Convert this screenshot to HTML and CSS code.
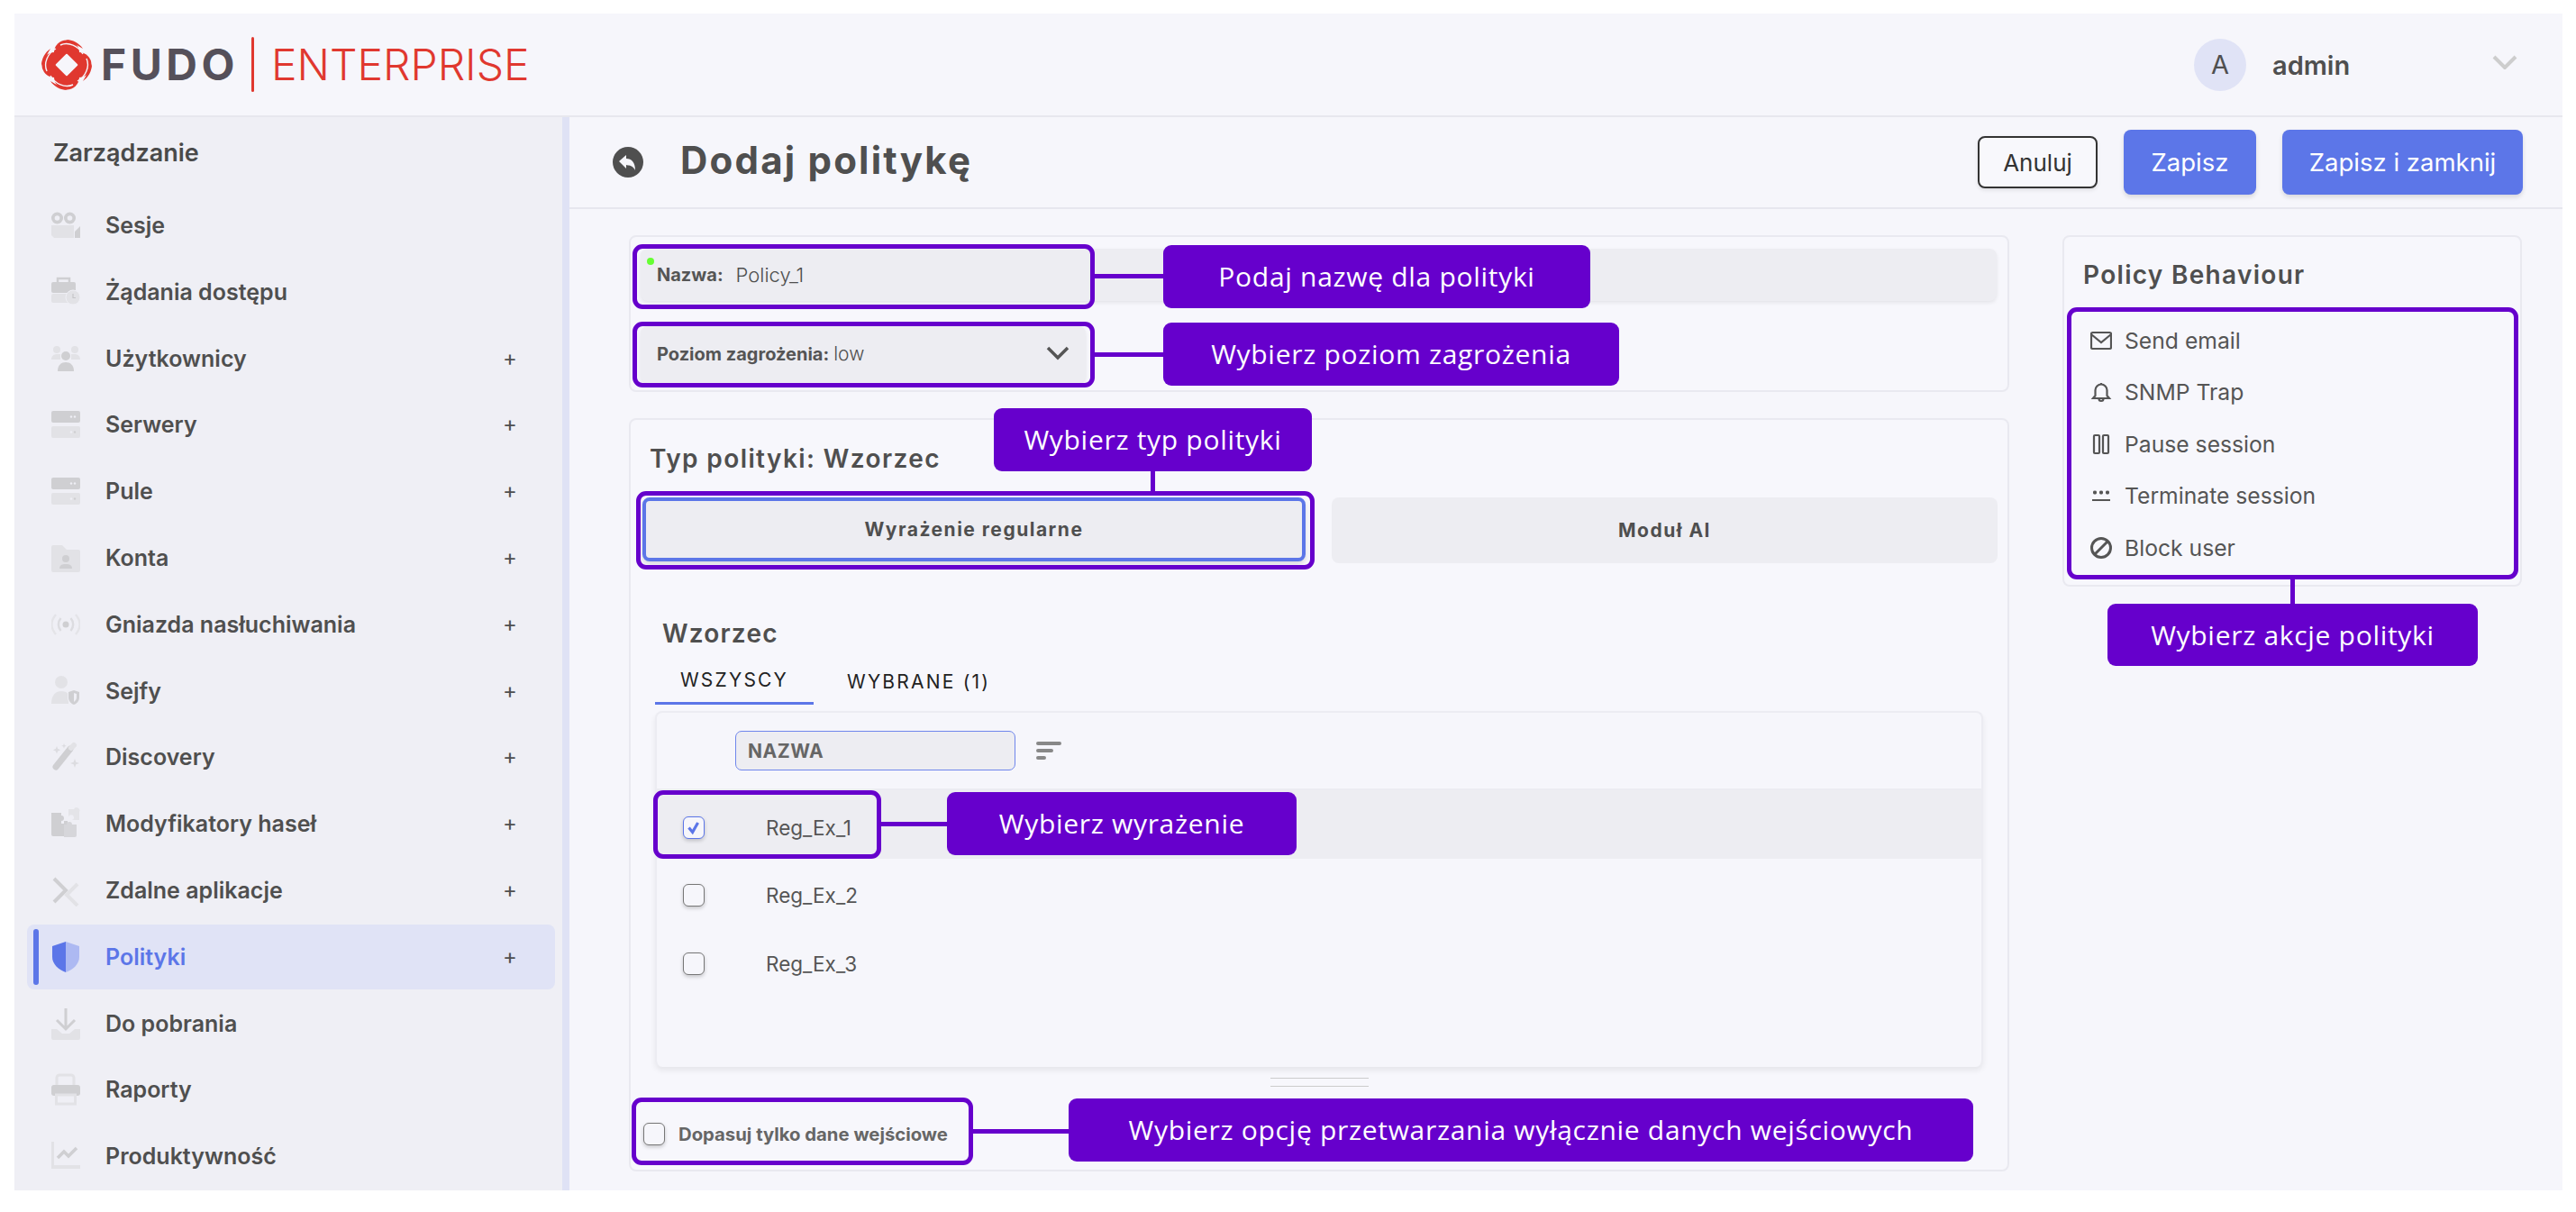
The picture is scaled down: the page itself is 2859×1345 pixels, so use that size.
FILE: index.html
```html
<!DOCTYPE html>
<html lang="pl">
<head>
<meta charset="utf-8">
<title>Fudo Enterprise</title>
<link rel="stylesheet" href="styles.css">
</head>
<body>
<div class="app">
  <header class="topbar">
    <div class="logo">
      <svg class="logo-mark" viewBox="0 0 58 58" aria-hidden="true">
        <g fill="#e0382f">
          <circle cx="29" cy="15.500" r="14"/>
          <circle cx="42.500" cy="29" r="14"/>
          <circle cx="29" cy="42.500" r="14"/>
          <circle cx="15.500" cy="29" r="14"/>
          <path d="M1 30C1 22 5 15 11 11 7 17 4 24 1 30z"/>
          <path d="M28 1C36 1 43 5 47 11 41 7 34 4 28 1z"/>
          <path d="M57 28C57 36 53 43 47 47 51 41 54 34 57 28z"/>
          <path d="M30 57C22 57 15 53 11 47 17 51 24 54 30 57z"/>
        </g>
        <g fill="none" stroke="#f6f6fb" stroke-width="1.400">
          <path d="M22 7C31 3 42 8 47 17"/>
          <path d="M51 22C55 31 50 42 41 47"/>
          <path d="M36 51C27 55 16 50 11 41"/>
          <path d="M7 36C3 27 8 16 17 11"/>
        </g>
        <rect x="20" y="20" width="18" height="18" rx="1" fill="#f6f6fb" transform="rotate(45 29 29)"/>
      </svg>
      <span class="logo-fudo">FUDO</span>
      <span class="logo-sep"></span>
      <span class="logo-ent">ENTERPRISE</span>
    </div>
    <div class="user">
      <span class="avatar">A</span>
      <span class="user-name">admin</span>
      <svg class="user-chev" viewBox="0 0 28 16" aria-hidden="true"><path d="M2 2l12 12L26 2" fill="none" stroke="#cdcdcd" stroke-width="4"/></svg>
    </div>
  </header>
  <div class="body">
    <nav class="sidebar">
      <div class="side-title">Zarządzanie</div>
      <ul class="menu">
        <li class="item">
          <svg class="ico" viewBox="0 0 32 36"><circle cx="6.500" cy="10" r="6.500" fill="#cfcfd2"/><circle cx="20.500" cy="10" r="6.500" fill="#cfcfd2"/><circle cx="6.500" cy="10" r="2.800" fill="#efeff5"/><circle cx="20.500" cy="10" r="2.800" fill="#efeff5"/><path d="M0 18h25v14H3l-3-3z" fill="#e2e2e6"/><path d="M26 25l6-6v13h-6z" fill="#cfcfd2"/></svg>
          <span class="label">Sesje</span>
        </li>
        <li class="item">
          <svg class="ico" viewBox="0 0 32 36"><path d="M7 7V3h13v4" fill="none" stroke="#cfcfd2" stroke-width="2.500"/><rect x="0" y="7" width="27" height="12" rx="2" fill="#cfcfd2"/><rect x="0" y="20" width="27" height="10" rx="2" fill="#e2e2e6"/><circle cx="24" cy="24" r="8" fill="#e2e2e6" stroke="#efeff5" stroke-width="1"/><path d="M24 20v4.500h3" fill="none" stroke="#c5c5c8" stroke-width="1.200"/></svg>
          <span class="label">Żądania dostępu</span>
        </li>
        <li class="item has-sub">
          <svg class="ico" viewBox="0 0 32 36"><circle cx="6" cy="8" r="4" fill="#e2e2e6"/><circle cx="26" cy="8" r="4" fill="#e2e2e6"/><path d="M0 19c0-4 3-6 6-6h4v6zM32 19c0-4-3-6-6-6h-4v6z" fill="#e2e2e6"/><circle cx="16" cy="15" r="5" fill="#cfcfd2"/><path d="M7 32c0-7 4-10 9-10s9 3 9 10z" fill="#cfcfd2"/></svg>
          <span class="label">Użytkownicy</span><span class="plus">+</span>
        </li>
        <li class="item has-sub">
          <svg class="ico" viewBox="0 0 32 36"><rect y="3" width="32" height="13" rx="2" fill="#cfcfd2"/><rect y="20" width="32" height="13" rx="2" fill="#e2e2e6"/><circle cx="22" cy="9.500" r="1.200" fill="#efeff5"/><circle cx="26" cy="9.500" r="1.200" fill="#efeff5"/><circle cx="22" cy="26.500" r="1.200" fill="#efeff5"/><circle cx="26" cy="26.500" r="1.200" fill="#cfcfd2"/></svg>
          <span class="label">Serwery</span><span class="plus">+</span>
        </li>
        <li class="item has-sub">
          <svg class="ico" viewBox="0 0 32 36"><rect y="3" width="32" height="13" rx="2" fill="#cfcfd2"/><rect y="20" width="32" height="13" rx="2" fill="#e2e2e6"/><circle cx="22" cy="9.500" r="1.200" fill="#efeff5"/><circle cx="26" cy="9.500" r="1.200" fill="#efeff5"/><circle cx="22" cy="26.500" r="1.200" fill="#efeff5"/><circle cx="26" cy="26.500" r="1.200" fill="#cfcfd2"/></svg>
          <span class="label">Pule</span><span class="plus">+</span>
        </li>
        <li class="item has-sub">
          <svg class="ico" viewBox="0 0 32 36"><path d="M2 4h10l5 5h13a2 2 0 0 1 2 2v21a2 2 0 0 1-2 2H2a2 2 0 0 1-2-2V6a2 2 0 0 1 2-2z" fill="#e2e2e6"/><circle cx="16" cy="19" r="4" fill="#cfcfd2"/><path d="M9 30c0-4 3-5 7-5s7 1 7 5z" fill="#cfcfd2"/></svg>
          <span class="label">Konta</span><span class="plus">+</span>
        </li>
        <li class="item has-sub">
          <svg class="ico" viewBox="0 0 32 36" fill="none"><path d="M5 7c-6 7-6 15 0 22M27 7c6 7 6 15 0 22" stroke="#e4e4e8" stroke-width="2.500"/><path d="M10.500 11c-3.500 4-3.500 10 0 14M21.500 11c3.500 4 3.500 10 0 14" stroke="#dcdce0" stroke-width="2.500"/><circle cx="16" cy="18" r="3.500" fill="#cfcfd2"/></svg>
          <span class="label">Gniazda nasłuchiwania</span><span class="plus">+</span>
        </li>
        <li class="item has-sub">
          <svg class="ico" viewBox="0 0 32 36"><circle cx="11" cy="8" r="7" fill="#e2e2e6"/><path d="M0 32c0-10 5-14 11-14 3 0 6 1 8 3v11z" fill="#e2e2e6"/><path d="M18 18l7-2 7 2v7c0 5-3 8-7 10-4-2-7-5-7-10z" fill="#efeff5"/><path d="M19 19l6-2 6 2v6c0 4-3 7-6 8-3-1-6-4-6-8z" fill="#cfcfd2"/><path d="M25 20l3 1v4c0 2-1 3-3 5z" fill="#efeff5"/></svg>
          <span class="label">Sejfy</span><span class="plus">+</span>
        </li>
        <li class="item has-sub">
          <svg class="ico" viewBox="0 0 32 36"><path d="M5 29L21 9" stroke="#cfcfd2" stroke-width="7" stroke-linecap="round"/><path d="M22 8l3-3" stroke="#e2e2e6" stroke-width="6" stroke-linecap="round"/><path d="M6 6l1.200 3 3 1.200-3 1.200-1.200 3-1.200-3-3-1.200 3-1.200zM14 3l.8 2 2 .8-2 .8-.8 2-.8-2-2-.8 2-.8zM26 20l1.300 3.700 3.700 1.300-3.700 1.300L26 30l-1.300-3.700-3.700-1.300 3.700-1.300z" fill="#dcdce0"/></svg>
          <span class="label">Discovery</span><span class="plus">+</span>
        </li>
        <li class="item has-sub">
          <svg class="ico" viewBox="0 0 32 36"><path d="M0 6h11v3a3 3 0 1 1 0 6v3h3v-3h4v17H2a2 2 0 0 1-2-2z" fill="#cfcfd2"/><path d="M14 19h3a3 3 0 1 1 6 0h5v12a2 2 0 0 1-2 2H14z" fill="#d6d6da"/><path d="M19 2h6a3 3 0 1 1 6 3v9h-8a3 3 0 1 0-4-3z" fill="#e4e4e8"/></svg>
          <span class="label">Modyfikatory haseł</span><span class="plus">+</span>
        </li>
        <li class="item has-sub">
          <svg class="ico" viewBox="0 0 32 36" fill="none"><path d="M3 5l13 13L3 31" stroke="#cfcfd2" stroke-width="4"/><path d="M29 11L17 23l12 12" stroke="#e2e2e6" stroke-width="4"/></svg>
          <span class="label">Zdalne aplikacje</span><span class="plus">+</span>
        </li>
        <li class="item has-sub active">
          <svg class="ico" viewBox="0 0 32 36"><path d="M16 1L1 6v12c0 8 7 14 15 17z" fill="#5c76e8"/><path d="M16 1l15 5v12c0 8-7 14-15 17z" fill="#adb9f2"/></svg>
          <span class="label">Polityki</span><span class="plus">+</span>
        </li>
        <li class="item">
          <svg class="ico" viewBox="0 0 32 36"><path d="M16 1v22M6 14l10 10 10-10" fill="none" stroke="#cfcfd2" stroke-width="3"/><path d="M0 24h6l6 5h8l6-5h6v10a2 2 0 0 1-2 2H2a2 2 0 0 1-2-2z" fill="#e2e2e6"/></svg>
          <span class="label">Do pobrania</span>
        </li>
        <li class="item">
          <svg class="ico" viewBox="0 0 32 36"><path d="M6 14V5a3 3 0 0 1 3-3h13a3 3 0 0 1 3 3v9" fill="none" stroke="#e2e2e6" stroke-width="3"/><rect y="13" width="32" height="12" rx="3" fill="#cfcfd2"/><rect x="5.500" y="24" width="21" height="10" fill="none" stroke="#e2e2e6" stroke-width="3"/></svg>
          <span class="label">Raporty</span>
        </li>
        <li class="item">
          <svg class="ico" viewBox="0 0 32 36"><path d="M0 2h3v26h29v4H0z" fill="#e2e2e6"/><path d="M7 20l7-7 5 5 9-9" fill="none" stroke="#cfcfd2" stroke-width="3.500"/></svg>
          <span class="label">Produktywność</span>
        </li>
      </ul>
    </nav>
    <div class="splitter"></div>
    <main class="main">
      <div class="page-head">
        <div class="page-title">
          <svg class="back" viewBox="0 0 34 34" aria-hidden="true"><circle cx="17" cy="17" r="17" fill="#4f4f4f"/><path d="M7 16l8-7v4c6 0 10 4 10 13-2-4-5-5.500-8-5.500l-2-.5v4z" fill="#f6f6fb"/></svg>
          <h1>Dodaj politykę</h1>
        </div>
        <div class="actions">
          <button class="btn btn-ghost">Anuluj</button>
          <button class="btn btn-primary btn-save">Zapisz</button>
          <button class="btn btn-primary btn-close">Zapisz i zamknij</button>
        </div>
      </div>
      <div class="content">
        <div class="left">
          <section class="card card-top">
            <div class="field field-name"><span class="dot"></span><b>Nazwa:</b><span class="val">Policy_1</span></div>
            <div class="field field-select"><b>Poziom zagrożenia:</b><span class="val-low">low</span>
              <svg class="sel-chev" viewBox="0 0 26 16" aria-hidden="true"><path d="M2 2l11 11L24 2" fill="none" stroke="#555" stroke-width="3.500"/></svg>
            </div>
          </section>
          <section class="card card-type">
            <h2 class="card-title">Typ polityki: Wzorzec</h2>
            <div class="type-tabs">
              <div class="type-tab selected">Wyrażenie regularne</div>
              <div class="type-tab">Moduł AI</div>
            </div>
            <div class="pattern">
              <h2 class="pattern-title">Wzorzec</h2>
              <div class="tabs">
                <div class="tab on">WSZYSCY</div>
                <div class="tab">WYBRANE (1)</div>
              </div>
              <div class="table">
                <div class="thead">
                  <div class="filter">NAZWA</div>
                  <svg class="sort" viewBox="0 0 28 20" aria-hidden="true"><g stroke="#888" stroke-width="4" stroke-linecap="round"><path d="M2 2h24M2 10h15M2 18h7"/></g></svg>
                </div>
                <div class="row row-on"><span class="check checked"><svg viewBox="0 0 24 24"><path d="M6 12l4.500 5.500L17 6" fill="none" stroke="#5c76e8" stroke-width="3.500"/></svg></span><span class="cell">Reg_Ex_1</span></div>
                <div class="row"><span class="check"></span><span class="cell">Reg_Ex_2</span></div>
                <div class="row"><span class="check"></span><span class="cell">Reg_Ex_3</span></div>
              </div>
              <div class="handle"></div>
            </div>
            <div class="only-input"><span class="check"></span><b>Dopasuj tylko dane wejściowe</b></div>
          </section>
        </div>
        <aside class="card card-side">
          <h2 class="side-head">Policy Behaviour</h2>
          <ul class="actions-list">
            <li><svg viewBox="0 0 24 24" fill="none" stroke="#555" stroke-width="2.200"><rect x="1" y="3" width="22" height="18" rx="1.500"/><path d="M1 5l11 9 11-9"/></svg>Send email</li>
            <li><svg viewBox="0 0 24 24" fill="none" stroke="#555" stroke-width="2.200"><path d="M3 19h18l-2.500-3v-6a6.500 6.500 0 0 0-13 0v6zM12 2v1.500M9.500 19.500a2.500 2.500 0 0 0 5 0"/></svg>SNMP Trap</li>
            <li><svg viewBox="0 0 24 24" fill="none" stroke="#555" stroke-width="2.200"><rect x="4" y="2" width="6" height="20" rx="1"/><rect x="14" y="2" width="6" height="20" rx="1"/></svg>Pause session</li>
            <li><svg viewBox="0 0 24 24" fill="none" stroke="#555"><path d="M3 8.500h4M5 6.500v4M3.500 7l3 3M6.500 7l-3 3M10 8.500h4M12 6.500v4M10.500 7l3 3M13.500 7l-3 3M17 8.500h4M19 6.500v4M17.500 7l3 3M20.500 7l-3 3" stroke-width="1.300"/><path d="M2 17h20" stroke-width="2"/></svg>Terminate session</li>
            <li><svg viewBox="0 0 24 24" fill="none" stroke="#555" stroke-width="3"><circle cx="12" cy="12" r="10.500"/><path d="M5 19L19 5"/></svg>Block user</li>
          </ul>
        </aside>
      </div>
    </main>
  </div>
  <div class="mark m-name"></div>
  <div class="line l-name"></div>
  <div class="tip t-name">Podaj nazwę dla polityki</div>
  <div class="mark m-level"></div>
  <div class="line l-level"></div>
  <div class="tip t-level">Wybierz poziom zagrożenia</div>
  <div class="mark m-type"></div>
  <div class="line l-type"></div>
  <div class="tip t-type">Wybierz typ polityki</div>
  <div class="mark m-action"></div>
  <div class="line l-action"></div>
  <div class="tip t-action">Wybierz akcje polityki</div>
  <div class="mark m-expr"></div>
  <div class="line l-expr"></div>
  <div class="tip t-expr">Wybierz wyrażenie</div>
  <div class="mark m-input"></div>
  <div class="line l-input"></div>
  <div class="tip t-input">Wybierz opcję przetwarzania wyłącznie danych wejściowych</div>
</div>
</body>
</html>
```

FILE: styles.css
```css
* { box-sizing: border-box; }
html, body { margin: 0; padding: 0; background: #fff; }
body { font-family: Inter, "Noto Sans", sans-serif; color: #4f4f4f; overflow: hidden; height: 1345px; }
h1, h2, ul { margin: 0; padding: 0; list-style: none; }

.app { position: relative; margin: 15px 0 0 16px; width: 2828px; height: 1306px; background: #f6f6fb; display: flex; flex-direction: column; overflow: hidden; }

.topbar { height: 115px; border-bottom: 2px solid #e7e7ee; display: flex; align-items: center; justify-content: space-between; flex: none; }
.logo { display: flex; align-items: center; margin-left: 29px; }
.logo-mark { width: 58px; height: 58px; flex: none; }
.logo-fudo { font: 700 48px/1 Inter, sans-serif; color: #55505a; margin-left: 9px; letter-spacing: 4.500px; }
.logo-sep { width: 3px; height: 61px; background: #e0382f; margin: 0 19px 0 14px; border-radius: 2px; }
.logo-ent { font: 300 48px/1 Inter, sans-serif; color: #e0382f; letter-spacing: 0; }
.user { display: flex; align-items: center; margin-right: 50px; }
.avatar { width: 58px; height: 58px; border-radius: 50%; background: #e0e3f6; font-size: 29px; display: flex; align-items: center; justify-content: center; color: #4f4f4f; }
.user-name { font-size: 29px; line-height: 36px; font-weight: 600; margin: 2px 0 0 29px; width: 244px; }
.user-chev { width: 28px; height: 16px; margin-top: -6px; }

.body { flex: 1; display: flex; min-height: 0; }
.sidebar { width: 608px; background: #efeff5; flex: none; overflow: hidden; }
.splitter { width: 8px; background: #dfe2f5; flex: none; }
.side-title { height: 76px; line-height: 79px; padding-left: 43px; font-size: 27px; font-weight: 600; color: #4a4a4a; margin-bottom: 8px; }
.menu { display: flex; flex-direction: column; gap: 1.800px; }
.item { position: relative; height: 72px; margin-left: 14px; width: 586px; padding-left: 27px; display: flex; align-items: center; border-radius: 8px; font-size: 25px; font-weight: 600; }
.ico { width: 32px; height: 36px; flex: none; margin-right: 28px; }
.label { flex: 1; color: #4f4f4f; }
.plus { width: 14px; margin-right: 44px; font-size: 24px; font-weight: 400; line-height: 1; text-align: center; }
.item.active { background: #e0e3f6; }
.item.active::before { content: ""; position: absolute; left: 7px; top: 5px; bottom: 5px; width: 6px; border-radius: 3px; background: #5c76e8; }
.item.active .label { color: #5c76e8; }

.main { flex: 1; display: flex; flex-direction: column; min-width: 0; }
.page-head { height: 102px; border-bottom: 2px solid #e7e7ee; display: flex; align-items: center; justify-content: space-between; padding: 0 44px 0 48px; flex: none; }
.page-title { display: flex; align-items: center; }
.back { width: 34px; height: 34px; margin-right: 41px; flex: none; }
.page-title h1 { font-size: 42px; font-weight: 700; letter-spacing: 2.200px; color: #4f4f4f; margin-top: -5px; }
.actions { display: flex; align-items: center; gap: 29px; }
.btn { font-family: Inter, sans-serif; font-size: 27.500px; border-radius: 8px; display: block; padding: 0; }
.btn-ghost { width: 133px; height: 58px; border: 2px solid #333; background: #f8f8fc; color: #333; box-shadow: 0 2px 4px rgba(0,0,0,.1); font-size: 26px; }
.btn-primary { height: 72px; border: 0; background: #5c76e8; color: #fff; box-shadow: 0 3px 5px rgba(0,0,0,.12); }
.btn-save { width: 147px; }
.btn-close { width: 267px; }

.content { flex: 1; display: flex; gap: 59px; padding: 29px 0 0 66px; min-height: 0; }
.left { width: 1532px; display: flex; flex-direction: column; gap: 29px; flex: none; }
.card { border: 2px solid #e9e9f0; border-radius: 8px; background: #f7f7fc; }
.card-top { height: 174px; padding: 13px 12px 0 11px; }
.field { display: flex; align-items: center; background: #ededf2; border-radius: 8px; box-shadow: 0 2px 4px rgba(0,0,0,.08); font-size: 20px; padding-left: 18px; position: relative; }
.field b { font-weight: 700; color: #555; }
.field-name { height: 58px; }
.field-name .val { margin-left: 14px; font-size: 22px; font-weight: 300; }
.dot { position: absolute; left: 7px; top: 10px; width: 8px; height: 8px; border-radius: 50%; background: #66ff33; }
.field-select { height: 63px; width: 494px; margin-top: 28px; padding-bottom: 2px; }
.val-low { margin-left: 5px; font-size: 21px; font-weight: 300; }
.sel-chev { position: absolute; right: 18px; top: 22px; width: 26px; height: 16px; }

.card-type { height: 836px; padding: 18px 11px 0 13px; }
.card-title { height: 50px; line-height: 50px; font-size: 28px; font-weight: 600; letter-spacing: 1.400px; padding-left: 8px; margin-bottom: 18px; color: #4f4f4f; }
.type-tabs { display: grid; grid-template-columns: 736px 739px; gap: 29px; }
.type-tab { height: 73px; background: #ededf2; border-radius: 8px; display: flex; align-items: center; justify-content: center; font-size: 21px; font-weight: 700; letter-spacing: 1.500px; color: #4f4f4f; }
.type-tab.selected { height: 71px; border: 4px solid #5c76e8; box-shadow: 0 3px 5px rgba(0,0,0,.12); }
.pattern { padding: 0 16px 0 14px; }
.pattern-title { height: 40px; line-height: 40px; margin-top: 58px; font-size: 28px; font-weight: 600; letter-spacing: 1.200px; padding-left: 8px; }
.tabs { display: flex; height: 59px; }
.tab { display: flex; align-items: center; justify-content: center; font-size: 21px; letter-spacing: 2.200px; color: #222; height: 59px; padding-top: 7px; }
.tab.on { width: 176px; border-bottom: 3px solid #5c76e8; }
.tab + .tab { margin-left: 37px; }
.table { margin-top: 7px; height: 395px; border: 2px solid #ececf2; border-bottom: 0; border-radius: 8px; background: #f6f6fb; box-shadow: 0 4px 6px rgba(0,0,0,.07); }
.thead { height: 86px; border-bottom: 2px solid #ececf2; display: flex; align-items: center; padding-left: 87px; }
.filter { width: 311px; height: 44px; border: 1.500px solid #6f86ec; border-radius: 7px; background: #ededf2; display: flex; align-items: center; padding-left: 13px; font-size: 21px; font-weight: 700; color: #666; letter-spacing: .5px; }
.sort { width: 28px; height: 20px; margin-left: 23px; }
.row { height: 75.500px; display: flex; align-items: center; padding: 7px 0 0 29px; }
.row-on { background: #ededf2; }
.check { width: 24px; height: 25px; flex: none; border: 1.500px solid #777; border-radius: 6px; background: #f6f6fb; box-shadow: 0 2px 4px rgba(0,0,0,.2); display: block; }
.check.checked { border-color: #5c76e8; }
.check svg { display: block; width: 100%; height: 100%; }
.cell { margin-left: 68px; font-size: 22.500px; color: #555; }
.handle { width: 109px; height: 10px; margin: 12px auto 0; border-top: 1.500px solid #ccc; border-bottom: 1.500px solid #ccc; }
.only-input { margin-top: 27px; height: 50px; display: flex; align-items: center; padding-left: 1px; font-size: 20.300px; color: #666; }
.only-input b { margin-left: 15px; font-weight: 700; }

.card-side { width: 510px; height: 390px; padding: 0 0 0 21px; flex: none; }
.side-head { height: 40px; line-height: 40px; margin-top: 22px; font-size: 28px; font-weight: 600; letter-spacing: 1.300px; color: #4f4f4f; }
.actions-list { margin-top: 24px; padding-left: 8px; }
.actions-list li { height: 57.500px; display: flex; align-items: center; font-size: 24.700px; color: #555; }
.actions-list svg { width: 24px; height: 24px; margin-right: 14px; flex: none; }

.mark { position: absolute; border: 5px solid #6600cc; border-radius: 11px; }
.line { position: absolute; background: #6600cc; }
.tip { position: absolute; background: #6600cc; border-radius: 9px; color: #fff; display: flex; align-items: center; justify-content: center; font: 400 30px/1 "Open Sans", sans-serif; letter-spacing: .7px; white-space: nowrap; }

.m-name { left: 686px; top: 256px; width: 513px; height: 72px; }
.l-name { left: 1199px; top: 288.500px; width: 76px; height: 5px; }
.t-name { left: 1275px; top: 257px; width: 474px; height: 70px; }
.m-level { left: 686px; top: 342px; width: 513px; height: 73px; }
.l-level { left: 1199px; top: 375.500px; width: 76px; height: 5px; }
.t-level { left: 1275px; top: 343px; width: 506px; height: 70px; }
.m-type { left: 690px; top: 530px; width: 753px; height: 87px; }
.l-type { left: 1261px; top: 508px; width: 5px; height: 22px; }
.t-type { left: 1087px; top: 438px; width: 353px; height: 70px; }
.m-action { left: 2278px; top: 326px; width: 501px; height: 302px; }
.l-action { left: 2526px; top: 628px; width: 5px; height: 27px; }
.t-action { left: 2323px; top: 655px; width: 411px; height: 69px; }
.m-expr { left: 709px; top: 862px; width: 253px; height: 76px; }
.l-expr { left: 962px; top: 896.500px; width: 73px; height: 5px; }
.t-expr { left: 1035px; top: 864px; width: 388px; height: 70px; }
.m-input { left: 685px; top: 1203px; width: 379px; height: 75px; }
.l-input { left: 1064px; top: 1237.500px; width: 106px; height: 5px; }
.t-input { left: 1170px; top: 1204px; width: 1004px; height: 70px; }
```
